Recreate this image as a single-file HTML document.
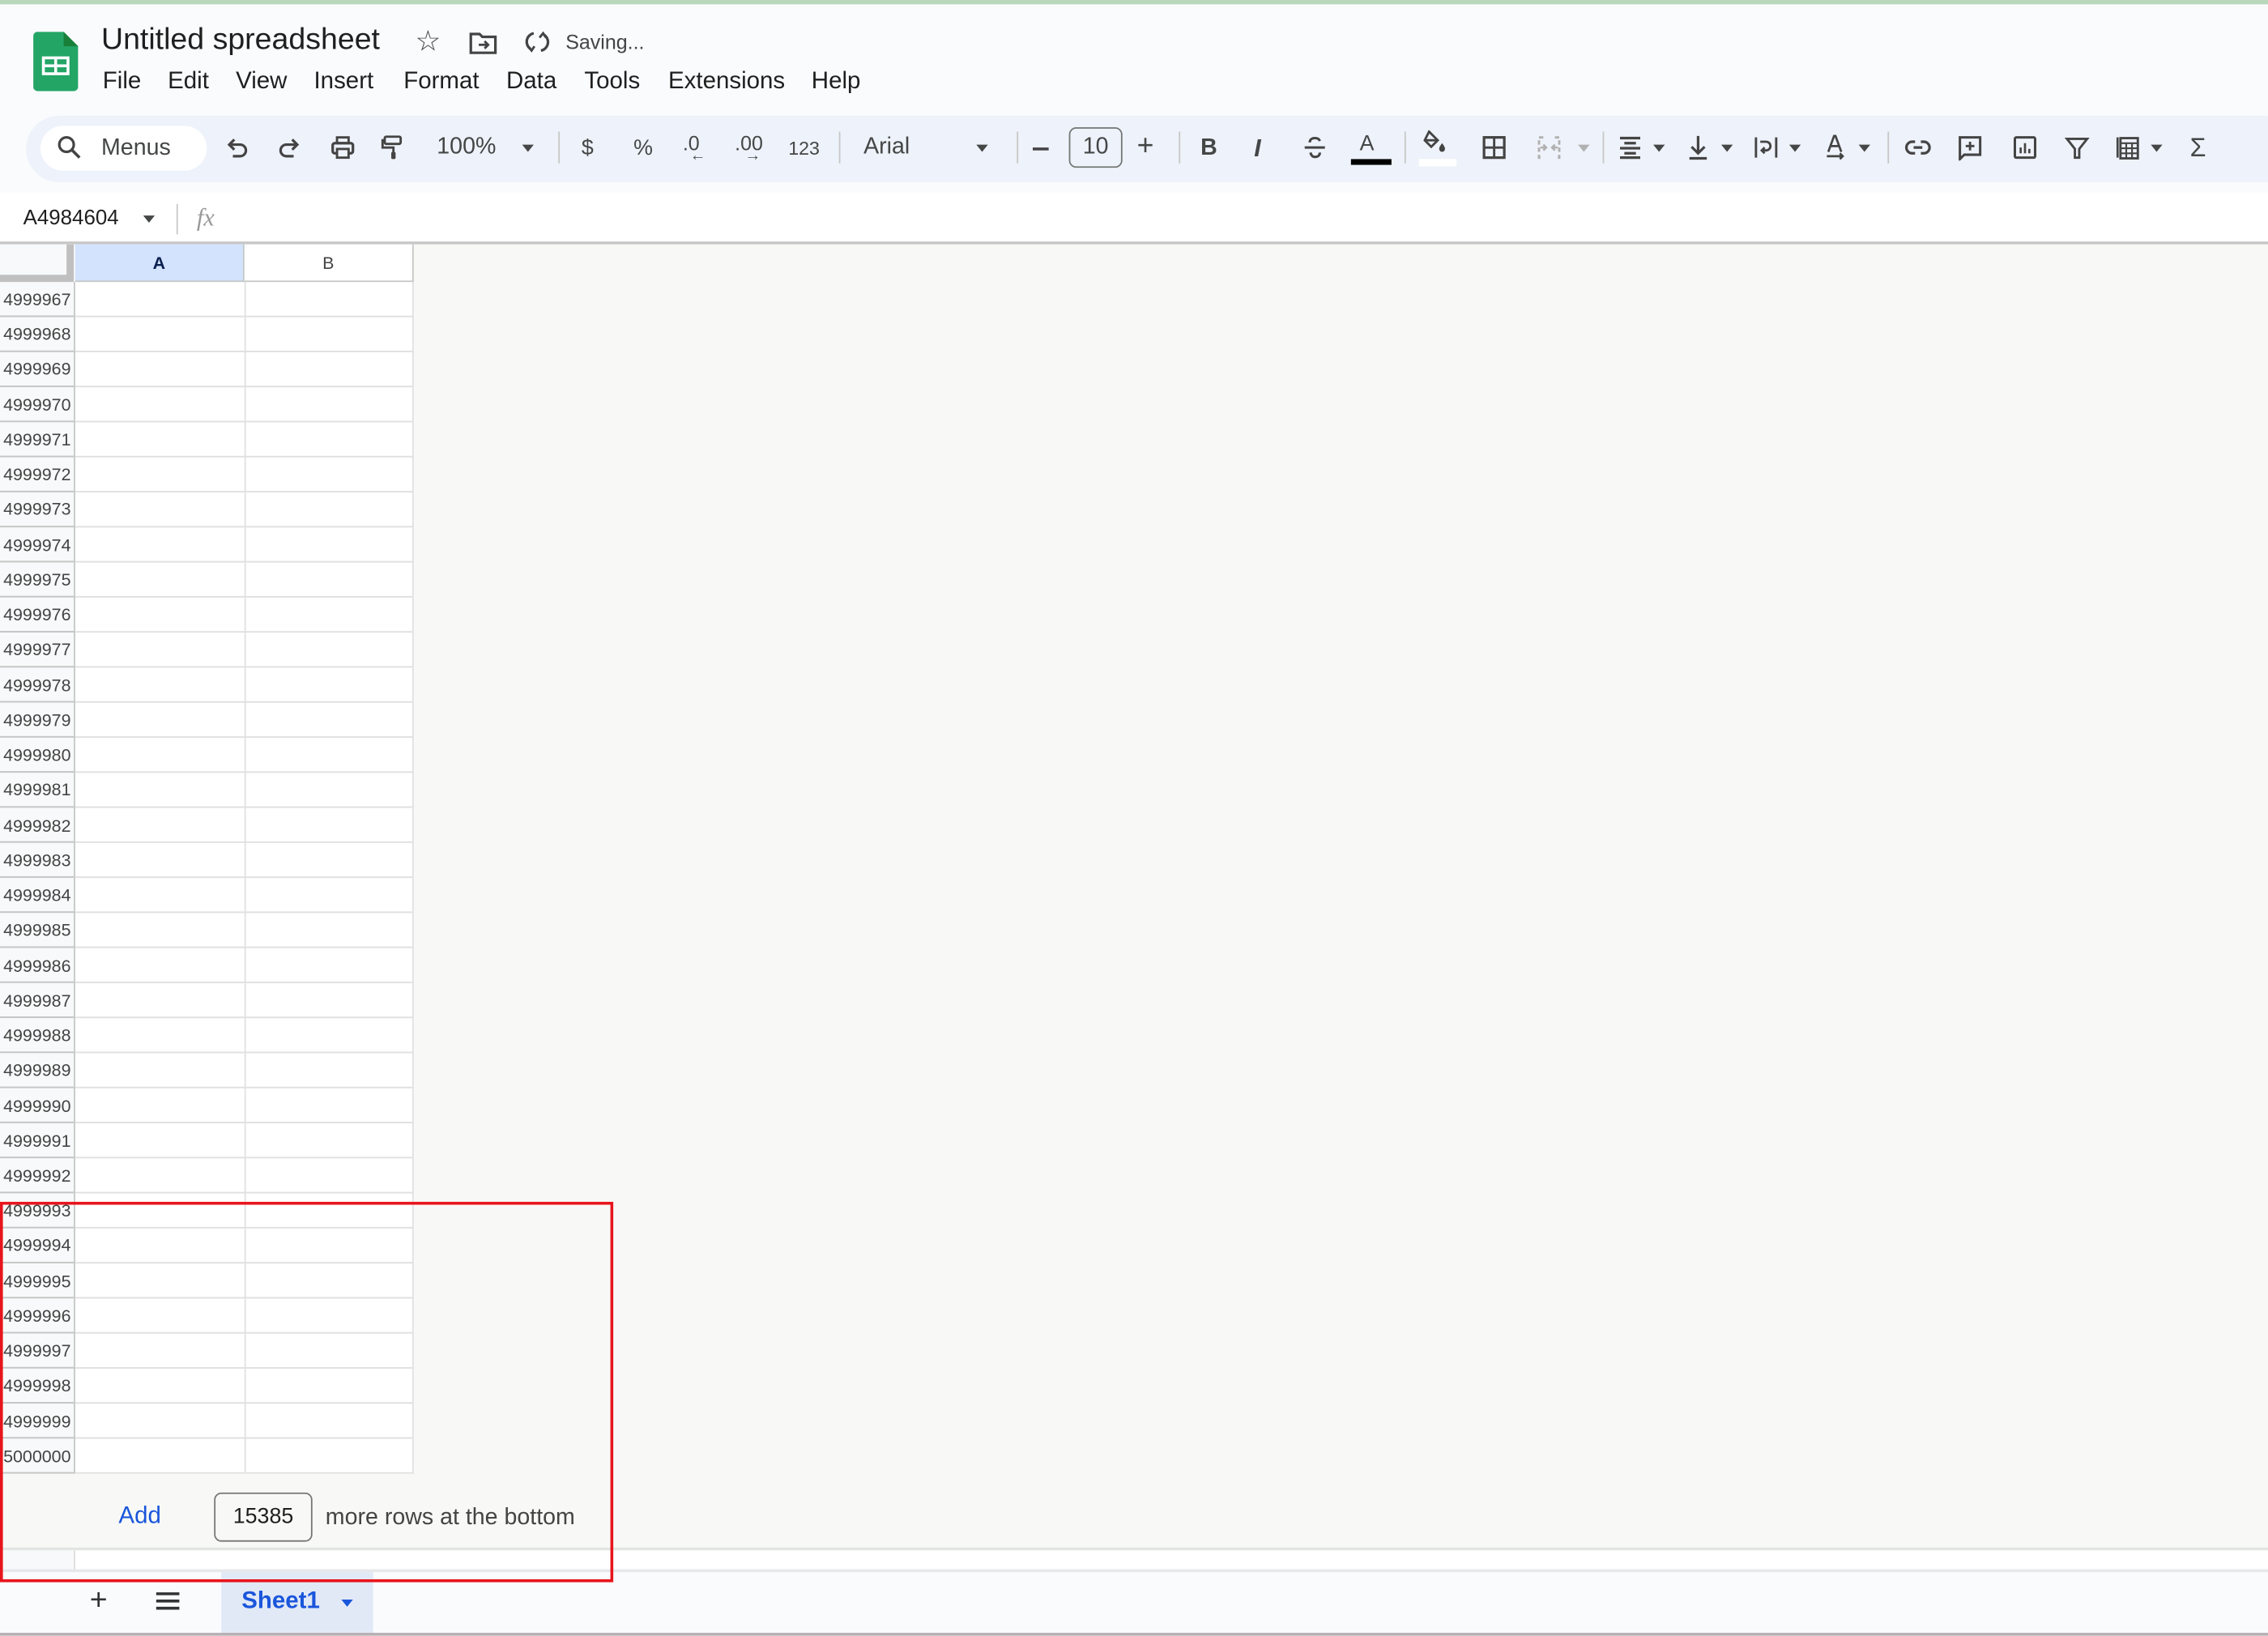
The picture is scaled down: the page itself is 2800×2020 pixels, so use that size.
<!DOCTYPE html>
<html><head><meta charset="utf-8"><style>
html,body{margin:0;padding:0;width:2800px;height:2020px;overflow:hidden;background:#f8f9fa}
#r{position:absolute;left:0;top:0;width:1568px;height:1131px;transform:scale(1.785714);transform-origin:0 0;font-family:"Liberation Sans",Arial,sans-serif;color:#444746;background:#f9fbfd}
.a{position:absolute}
.ic{position:absolute;top:93px;width:18px;height:18px}
.ic svg{width:18px;height:18px;display:block}
.t{position:absolute;white-space:nowrap}
.sep{position:absolute;top:91px;width:1px;height:22px;background:#c7c7c7}
.dd{position:absolute;top:100px;width:0;height:0;border-left:4.5px solid transparent;border-right:4.5px solid transparent;border-top:5px solid #444746}
.rl{position:absolute;left:0;width:52px;font-size:12px;color:#444;text-align:right;padding-right:3px;box-sizing:border-box;overflow:hidden;direction:rtl}
</style></head><body><div id="r">
<div class="a" style="left:0;top:0;width:1568px;height:3px;background:#b9d7bb"></div>
<svg class="a" style="left:23px;top:22px" width="31" height="41" viewBox="0 0 31 41"><path d="M3 0h18l10 10v28a3 3 0 0 1-3 3H3a3 3 0 0 1-3-3V3a3 3 0 0 1 3-3z" fill="#23a566"/><path d="M21 0l10 10H21z" fill="#188038"/><rect x="6" y="17" width="19" height="13" fill="#fff"/><rect x="8" y="19" width="6.5" height="3.5" fill="#23a566"/><rect x="16.5" y="19" width="6.5" height="3.5" fill="#23a566"/><rect x="8" y="24.5" width="6.5" height="3.5" fill="#23a566"/><rect x="16.5" y="24.5" width="6.5" height="3.5" fill="#23a566"/></svg>
<div class="t" style="left:70px;top:16px;font-size:21px;color:#1f1f1f">Untitled spreadsheet</div>
<div class="t" style="left:287px;top:16px;font-size:20px;color:#444">☆</div>
<svg class="a" style="left:324px;top:21px" width="20" height="17" viewBox="0 0 20 17"><path d="M1.5 2.5h6l2 2h9v11h-17z" fill="none" stroke="#444" stroke-width="1.8"/><path d="M7 10h6M11 7.5l2.5 2.5-2.5 2.5" fill="none" stroke="#444" stroke-width="1.6"/></svg>
<svg class="a" style="left:363px;top:20px" width="17" height="18" viewBox="0 0 17 18"><path d="M6 3A6 6 0 0 0 4 14M11 15a6 6 0 0 0 2-11" fill="none" stroke="#444" stroke-width="1.8"/><path d="M2 12l2.5 3 2-3M10 6l2.5-3 2 3" fill="none" stroke="#444" stroke-width="1.6"/></svg>
<div class="t" style="left:391px;top:21px;font-size:14px;color:#444">Saving...</div>
<div class="t" style="top:47px;left:71px;font-size:16.5px;color:#1f1f1f">
<span class="a" style="left:0">File</span><span class="a" style="left:45px">Edit</span><span class="a" style="left:92px">View</span><span class="a" style="left:146px">Insert</span><span class="a" style="left:208px">Format</span><span class="a" style="left:279px">Data</span><span class="a" style="left:333px">Tools</span><span class="a" style="left:391px">Extensions</span><span class="a" style="left:490px">Help</span></div>
<div class="a" style="left:18px;top:80px;width:1570px;height:46px;background:#eef2fa;border-radius:23px"></div>
<div class="a" style="left:28px;top:87px;width:115px;height:31px;background:#fff;border-radius:16px"></div>
<svg class="a" style="left:39px;top:93px" width="18" height="18" viewBox="0 0 18 18"><circle cx="7" cy="7" r="5" fill="none" stroke="#444" stroke-width="1.8"/><path d="M10.5 10.5l5.5 5.5" stroke="#444" stroke-width="2"/></svg>
<div class="t" style="left:70px;top:94px;font-size:16px">Menus</div>
<div class="ic" style="left:155px"><svg viewBox="0 0 18 18"><path d="M4 7h7a4 4 0 0 1 0 8H6" fill="none" stroke="#444" stroke-width="1.8"/><path d="M7 3.5L3.5 7 7 10.5" fill="none" stroke="#444" stroke-width="1.8"/></svg></div>
<div class="ic" style="left:191px"><svg viewBox="0 0 18 18"><path d="M14 7H7a4 4 0 0 0 0 8h5" fill="none" stroke="#444" stroke-width="1.8"/><path d="M11 3.5L14.5 7 11 10.5" fill="none" stroke="#444" stroke-width="1.8"/></svg></div>
<div class="ic" style="left:228px"><svg viewBox="0 0 18 18"><rect x="5" y="2" width="8" height="4" fill="none" stroke="#444" stroke-width="1.6"/><rect x="2" y="6" width="14" height="7" rx="1.5" fill="none" stroke="#444" stroke-width="1.8"/><rect x="5" y="10" width="8" height="6" fill="#eef2fa" stroke="#444" stroke-width="1.6"/></svg></div>
<div class="ic" style="left:263px"><svg viewBox="0 0 18 18"><rect x="3" y="1.5" width="11" height="5" rx="1" fill="none" stroke="#444" stroke-width="1.6"/><path d="M3 4H1.5v5H9v3" fill="none" stroke="#444" stroke-width="1.6"/><rect x="7.5" y="12" width="3" height="5" rx="1" fill="#444"/></svg></div>
<div class="t" style="left:302px;top:93px;font-size:16px">100%</div>
<div class="dd" style="left:361px"></div>
<div class="sep" style="left:386px"></div>
<div class="t" style="left:402px;top:94px;font-size:15px">$</div>
<div class="t" style="left:438px;top:94px;font-size:15px">%</div>
<div class="t" style="left:472px;top:91px;font-size:14px">.0</div>
<div class="t" style="left:477px;top:102px;font-size:11px">←</div>
<div class="t" style="left:508px;top:91px;font-size:14px">.00</div>
<div class="t" style="left:515px;top:102px;font-size:11px">→</div>
<div class="t" style="left:545px;top:95px;font-size:13px">123</div>
<div class="sep" style="left:580px"></div>
<div class="t" style="left:597px;top:93px;font-size:16px">Arial</div>
<div class="dd" style="left:675px"></div>
<div class="sep" style="left:703px"></div>
<div class="a" style="left:714px;top:102px;width:11px;height:2px;background:#444"></div>
<div class="a" style="left:739px;top:88px;width:37px;height:28px;border:1px solid #747775;border-radius:5px;box-sizing:border-box;font-size:16px;text-align:center;line-height:26px">10</div>
<div class="t" style="left:786px;top:90px;font-size:20px">+</div>
<div class="sep" style="left:815px"></div>
<div class="t" style="left:830px;top:94px;font-size:16px;font-weight:bold">B</div>
<div class="t" style="left:867px;top:93px;font-size:17px;font-style:italic;font-weight:bold">I</div>
<div class="ic" style="left:900px"><svg viewBox="0 0 18 18"><path d="M12.5 4.5C12 3 10.8 2.5 9 2.5 7 2.5 5.5 3.5 5.5 5.5M6 12.5c.5 2 1.5 3 3 3 2 0 3.5-1 3.5-3" fill="none" stroke="#444" stroke-width="1.7"/><path d="M2 9h14" stroke="#444" stroke-width="1.7"/></svg></div>
<div class="t" style="left:940px;top:91px;font-size:15px">A</div>
<div class="a" style="left:934px;top:110px;width:28px;height:4px;background:#000"></div>
<div class="sep" style="left:971px"></div>
<div class="ic" style="left:984px;top:90px"><svg viewBox="0 0 18 18"><path d="M4 1l6 6-4.5 4.5L1 7z" fill="none" stroke="#444" stroke-width="1.6"/><path d="M1.5 7h8" stroke="#444" stroke-width="1.6"/><path d="M13 9c1.5 2 2 3 2 4a2 2 0 0 1-4 0c0-1 .5-2 2-4z" fill="#444"/></svg></div>
<div class="a" style="left:981px;top:110px;width:26px;height:5px;background:#fff"></div>
<div class="ic" style="left:1024px"><svg viewBox="0 0 18 18"><rect x="2" y="2" width="14" height="14" fill="none" stroke="#444" stroke-width="1.8"/><path d="M9 2v14M2 9h14" stroke="#444" stroke-width="1.6"/></svg></div>
<div class="ic" style="left:1062px"><svg viewBox="0 0 18 18"><path d="M5 2H2v14h3M13 2h3v14h-3" fill="none" stroke="#b0b0b0" stroke-width="1.6" stroke-dasharray="3 2"/><path d="M3 9h4M5 7l2 2-2 2M15 9h-4M13 7l-2 2 2 2" fill="none" stroke="#b0b0b0" stroke-width="1.4"/></svg></div>
<div class="dd" style="left:1091px;border-top-color:#b0b0b0"></div>
<div class="sep" style="left:1108px"></div>
<div class="ic" style="left:1118px"><svg viewBox="0 0 18 18"><path d="M2 2.5h14M5 6h8M2 9.5h14M5 13h8M2 16h14" stroke="#444" stroke-width="1.8"/></svg></div>
<div class="dd" style="left:1143px"></div>
<div class="ic" style="left:1165px"><svg viewBox="0 0 18 18"><path d="M9 1v12M4.5 8.5L9 13l4.5-4.5M3 16.5h12" fill="none" stroke="#444" stroke-width="1.8"/></svg></div>
<div class="dd" style="left:1190px"></div>
<div class="ic" style="left:1212px"><svg viewBox="0 0 18 18"><path d="M2 2v14M16 2v14M5 5h4a3 3 0 0 1 0 6H6M8 9l-2 2 2 2" fill="none" stroke="#444" stroke-width="1.6"/></svg></div>
<div class="dd" style="left:1237px"></div>
<div class="ic" style="left:1260px"><svg viewBox="0 0 18 18"><path d="M4 12L8 1h1l4 11M5.5 8h6M3 15h11M12 13l2 2-2 2" fill="none" stroke="#444" stroke-width="1.5"/></svg></div>
<div class="dd" style="left:1285px"></div>
<div class="sep" style="left:1305px"></div>
<div class="ic" style="left:1317px"><svg viewBox="0 0 18 18"><path d="M7 5H5a4 4 0 0 0 0 8h2M11 5h2a4 4 0 0 1 0 8h-2M6 9h6" fill="none" stroke="#444" stroke-width="1.8"/></svg></div>
<div class="ic" style="left:1353px"><svg viewBox="0 0 18 18"><path d="M2 2h14v12H5l-3 3z" fill="none" stroke="#444" stroke-width="1.7"/><path d="M9 5v6M6 8h6" stroke="#444" stroke-width="1.6"/></svg></div>
<div class="ic" style="left:1391px"><svg viewBox="0 0 18 18"><rect x="2" y="2" width="14" height="14" rx="1" fill="none" stroke="#444" stroke-width="1.7"/><path d="M6 13V9M9 13V6M12 13v-3" stroke="#444" stroke-width="1.5"/></svg></div>
<div class="ic" style="left:1427px"><svg viewBox="0 0 18 18"><path d="M2 3h14l-5.5 7v6h-3v-6z" fill="none" stroke="#444" stroke-width="1.6"/></svg></div>
<div class="ic" style="left:1462px"><svg viewBox="0 0 18 18"><path d="M2 2v14" stroke="#444" stroke-width="1.5"/><rect x="4" y="2.5" width="12" height="14" fill="none" stroke="#444" stroke-width="1.6"/><path d="M4 6h12M4 9.5h12M4 13h12M8 6v10.5M12 6v10.5" stroke="#444" stroke-width="1.2"/></svg></div>
<div class="dd" style="left:1487px"></div>
<div class="t" style="left:1514px;top:92px;font-size:18px">Σ</div>
<div class="a" style="left:0;top:133px;width:1568px;height:35px;background:#fff"></div>
<div class="t" style="left:16px;top:143px;font-size:14.5px;color:#1f1f1f">A4984604</div>
<div class="dd" style="left:99px;top:149px"></div>
<div class="a" style="left:122px;top:141px;width:1px;height:21px;background:#c7c7c7"></div>
<div class="t" style="left:136px;top:141px;font-size:17px;font-style:italic;font-family:'Liberation Serif',serif;color:#999">fx</div>
<div class="a" style="left:0;top:167px;width:1568px;height:2px;background:#c7c7c7"></div>
<div class="a" style="left:0;top:169px;width:1568px;height:901px;background:#f8f9f7"></div>
<div class="a" style="left:0;top:169px;width:46px;height:21px;background:#f8f9fa;border-right:5px solid #c0c0c0;border-bottom:5px solid #c0c0c0"></div>
<div class="a" style="left:52px;top:169px;width:117px;height:26px;background:#d3e3fd;border-right:1px solid #c4c7c5;border-bottom:1px solid #c4c7c5;box-sizing:border-box;text-align:center;font-size:12px;font-weight:bold;line-height:26px;color:#0b1f4f">A</div>
<div class="a" style="left:169px;top:169px;width:117px;height:26px;background:#fff;border-right:1px solid #c4c7c5;border-bottom:1px solid #c4c7c5;box-sizing:border-box;text-align:center;font-size:12px;line-height:26px;color:#444">B</div>
<div class="a" style="left:0;top:195px;width:286px;height:824px;background:#fff;background-image:linear-gradient(#e1e1e1 1px,transparent 1px);background-size:100% 24.24px;background-position:0 23.24px"></div>
<div class="a" style="left:0;top:195px;width:52px;height:824px;background:#f8f9fa;background-image:linear-gradient(transparent 23.24px,#c4c7c5 23.24px);background-size:100% 24.24px;border-right:1px solid #c4c7c5;box-sizing:border-box"></div>
<div class="a" style="left:169px;top:195px;width:1px;height:824px;background:#e1e1e1"></div>
<div class="a" style="left:285px;top:195px;width:1px;height:824px;background:#e1e1e1"></div>
<div id="rows"></div>
<div class="t" style="left:82px;top:1039px;font-size:16.5px;color:#1a56db">Add</div>
<div class="a" style="left:148px;top:1032px;width:68px;height:34px;border:1px solid #747775;border-radius:5px;box-sizing:border-box;background:#f8f9f7;font-size:15px;text-align:center;line-height:32px;color:#1f1f1f">15385</div>
<div class="t" style="left:225px;top:1041px;font-size:16px;color:#444">more rows at the bottom</div>
<div class="a" style="left:0;top:1070px;width:1568px;height:2px;background:#e3e5e3"></div>
<div class="a" style="left:0;top:1072px;width:1568px;height:13px;background:#fff"></div>
<div class="a" style="left:0;top:1072px;width:52px;height:13px;background:#f8f9fa;border-right:1px solid #ddd;box-sizing:border-box"></div>
<div class="a" style="left:0;top:1085px;width:1568px;height:2px;background:#e6e8ea"></div>
<div class="a" style="left:0;top:1087px;width:1568px;height:42px;background:#f9fbfd"></div>
<div class="t" style="left:62px;top:1095px;font-size:21px;color:#333">+</div>
<svg class="a" style="left:107px;top:1100px" width="18" height="14" viewBox="0 0 18 14"><path d="M1 2h16M1 7h16M1 12h16" stroke="#333" stroke-width="2"/></svg>
<div class="a" style="left:153px;top:1087px;width:105px;height:42px;background:#e1e9f7"></div>
<div class="t" style="left:167px;top:1098px;font-size:16.5px;font-weight:bold;color:#1a56db">Sheet1</div>
<div class="dd" style="left:236px;top:1106px;border-top-color:#1a56db"></div>
<div class="a" style="left:0;top:1129px;width:1568px;height:2px;background:#b8b0b4"></div>
<div class="a" style="left:0;top:831px;width:424px;height:263px;border:2px solid #e8141c;box-sizing:border-box"></div>
</div>
<script>
var h='';for(var i=0;i<34;i++){var n=4999967+i;h+='<div class="rl" style="top:'+(195+i*24.24+5)+'px">'+n+'</div>';}
document.getElementById('rows').outerHTML=h;
</script>
</body></html>
